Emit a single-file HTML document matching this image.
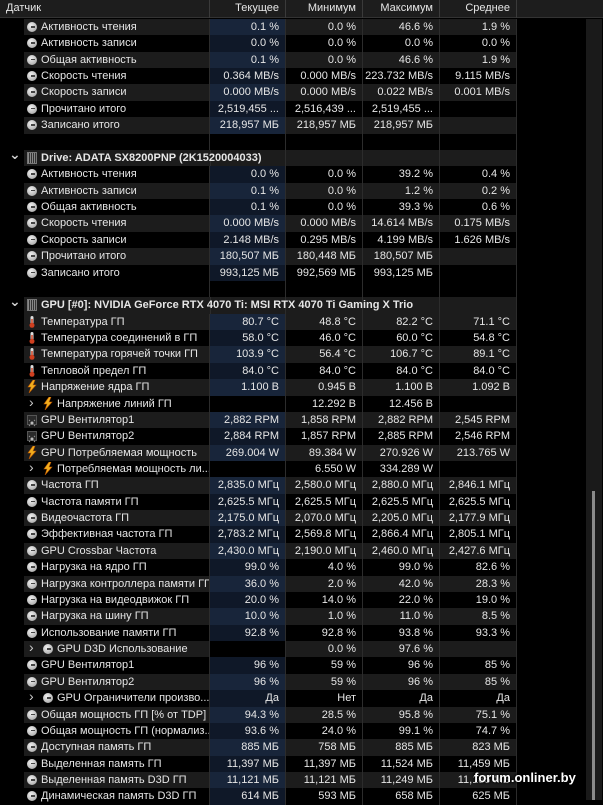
<!DOCTYPE html>
<html><head><meta charset="utf-8"><style>
*{margin:0;padding:0;box-sizing:border-box}
body{width:603px;height:800px;background:#000;overflow:hidden;position:relative;font-family:"Liberation Sans","DejaVu Sans",sans-serif;font-size:11px;color:#e6e6e6}
.hd{position:absolute;left:0;top:0;width:603px;height:18px;background:#1d1d1d;border-bottom:1px solid #333;display:flex}
.hd div{height:18px;line-height:17px;border-right:1px solid #3a3a3a;padding:0 6px;text-align:right}
.r{position:absolute;left:0;height:16.4px;width:517px;display:flex;line-height:16px;white-space:nowrap}
.r div{height:16.4px;border-right:1px solid #2c2c2c;text-align:right;padding-right:6px;overflow:hidden}
.g .n,.g .v{background:#1c1c1c}
.g .c{background:#18253a}
.k .c{background:#0f1828}
.n{width:210px;text-align:left!important;padding-left:41px!important;position:relative}
.c{width:76px}.v{width:77px}
.n i{position:absolute;left:27px;top:3px;width:10px;height:10px}
.n.s{padding-left:57px!important}
.n.s i{left:43px}
.n.s:before{content:"›";position:absolute;left:29px;top:-2px;font-size:14px;color:#ccc}
.ck{border-radius:50%;background:radial-gradient(circle at 40% 35%,#f0f0f0,#9a9a9a)}
.ck:after{content:"";position:absolute;left:4px;top:4px;width:4px;height:1.5px;background:#444}
.b{font-weight:bold}
.hdr{padding-left:41px!important}
.hdr:before{content:"⌄";position:absolute;left:9px;top:-4px;font-size:14px;color:#ccc}
.sb{position:absolute;left:586px;top:19px;width:16px;height:781px;background:#1a1a1a}
.th{position:absolute;left:592px;top:491px;width:3px;height:309px;background:#8a8a8a}
.wm{position:absolute;left:474px;top:770px;font-weight:bold;font-size:13px;color:#fff;text-shadow:1px 1px 2px #000,-1px -1px 2px #000}
</style></head><body>
<div class="hd"><div style="width:210px;text-align:left">Датчик</div><div style="width:76px">Текущее</div><div style="width:77px">Минимум</div><div style="width:77px">Максимум</div><div style="width:77px">Среднее</div><div style="flex:1;border:none"></div></div>
<div id="rows"></div>
<div class="sb"></div><div class="th"></div>
<div class="wm">forum.onliner.by</div>
<script>
var CK='<i class="ck"></i>';
var TH='<i><svg width="10" height="12" viewBox="0 0 10 12" style="margin-top:-1px"><rect x="3.5" y="0" width="3" height="8" rx="1.5" fill="#ddd"/><rect x="4.3" y="3" width="1.4" height="6" fill="#d04020"/><circle cx="5" cy="9.3" r="2.5" fill="#d04020"/></svg></i>';
var BT='<i><svg width="10" height="13" viewBox="0 0 10 13" style="margin-top:-2px"><path d="M6 0L1 7h3l-2 6 7-8H6l2-5z" fill="#f2b01e" stroke="#c05a00" stroke-width=".6"/></svg></i>';
var FN='<i style="background:#2a2a2a;border:1px solid #555"><svg width="8" height="8" viewBox="0 0 8 8"><circle cx="4" cy="4" r="1.5" fill="#bbb"/><circle cx="1.5" cy="1.5" r=".7" fill="#888"/><circle cx="6.5" cy="1.5" r=".7" fill="#888"/><circle cx="1.5" cy="6.5" r=".7" fill="#888"/><circle cx="6.5" cy="6.5" r=".7" fill="#888"/></svg></i>';
var CH='<i style="background:repeating-linear-gradient(90deg,#888 0 1px,#333 1px 2px);border:1px solid #777;height:12px;top:2px"></i>';
var R=[
[CK,'Активность чтения','0.1 %','0.0 %','46.6 %','1.9 %'],
[CK,'Активность записи','0.0 %','0.0 %','0.0 %','0.0 %'],
[CK,'Общая активность','0.1 %','0.0 %','46.6 %','1.9 %'],
[CK,'Скорость чтения','0.364 MB/s','0.000 MB/s','223.732 MB/s','9.115 MB/s'],
[CK,'Скорость записи','0.000 MB/s','0.000 MB/s','0.022 MB/s','0.001 MB/s'],
[CK,'Прочитано итого','2,519,455 ...','2,516,439 ...','2,519,455 ...',''],
[CK,'Записано итого','218,957 МБ','218,957 МБ','218,957 МБ',''],
null,
['H','Drive: ADATA SX8200PNP (2K1520004033)'],
[CK,'Активность чтения','0.0 %','0.0 %','39.2 %','0.4 %'],
[CK,'Активность записи','0.1 %','0.0 %','1.2 %','0.2 %'],
[CK,'Общая активность','0.1 %','0.0 %','39.3 %','0.6 %'],
[CK,'Скорость чтения','0.000 MB/s','0.000 MB/s','14.614 MB/s','0.175 MB/s'],
[CK,'Скорость записи','2.148 MB/s','0.295 MB/s','4.199 MB/s','1.626 MB/s'],
[CK,'Прочитано итого','180,507 МБ','180,448 МБ','180,507 МБ',''],
[CK,'Записано итого','993,125 МБ','992,569 МБ','993,125 МБ',''],
null,
['H','GPU [#0]: NVIDIA GeForce RTX 4070 Ti: MSI RTX 4070 Ti Gaming X Trio'],
[TH,'Температура ГП','80.7 °C','48.8 °C','82.2 °C','71.1 °C'],
[TH,'Температура соединений в ГП','58.0 °C','46.0 °C','60.0 °C','54.8 °C'],
[TH,'Температура горячей точки ГП','103.9 °C','56.4 °C','106.7 °C','89.1 °C'],
[TH,'Тепловой предел ГП','84.0 °C','84.0 °C','84.0 °C','84.0 °C'],
[BT,'Напряжение ядра ГП','1.100 В','0.945 В','1.100 В','1.092 В'],
['S'+BT,'Напряжение линий ГП','','12.292 В','12.456 В',''],
[FN,'GPU Вентилятор1','2,882 RPM','1,858 RPM','2,882 RPM','2,545 RPM'],
[FN,'GPU Вентилятор2','2,884 RPM','1,857 RPM','2,885 RPM','2,546 RPM'],
[BT,'GPU Потребляемая мощность','269.004 W','89.384 W','270.926 W','213.765 W'],
['S'+BT,'Потребляемая мощность ли...','','6.550 W','334.289 W',''],
[CK,'Частота ГП','2,835.0 МГц','2,580.0 МГц','2,880.0 МГц','2,846.1 МГц'],
[CK,'Частота памяти ГП','2,625.5 МГц','2,625.5 МГц','2,625.5 МГц','2,625.5 МГц'],
[CK,'Видеочастота ГП','2,175.0 МГц','2,070.0 МГц','2,205.0 МГц','2,177.9 МГц'],
[CK,'Эффективная частота ГП','2,783.2 МГц','2,569.8 МГц','2,866.4 МГц','2,805.1 МГц'],
[CK,'GPU Crossbar Частота','2,430.0 МГц','2,190.0 МГц','2,460.0 МГц','2,427.6 МГц'],
[CK,'Нагрузка на ядро ГП','99.0 %','4.0 %','99.0 %','82.6 %'],
[CK,'Нагрузка контроллера памяти ГП','36.0 %','2.0 %','42.0 %','28.3 %'],
[CK,'Нагрузка на видеодвижок ГП','20.0 %','14.0 %','22.0 %','19.0 %'],
[CK,'Нагрузка на шину ГП','10.0 %','1.0 %','11.0 %','8.5 %'],
[CK,'Использование памяти ГП','92.8 %','92.8 %','93.8 %','93.3 %'],
['S'+CK,'GPU D3D Использование','','0.0 %','97.6 %',''],
[CK,'GPU Вентилятор1','96 %','59 %','96 %','85 %'],
[CK,'GPU Вентилятор2','96 %','59 %','96 %','85 %'],
['S'+CK,'GPU Ограничители произво...','Да','Нет','Да','Да'],
[CK,'Общая мощность ГП [% от TDP]','94.3 %','28.5 %','95.8 %','75.1 %'],
[CK,'Общая мощность ГП (нормализ...','93.6 %','24.0 %','99.1 %','74.7 %'],
[CK,'Доступная память ГП','885 МБ','758 МБ','885 МБ','823 МБ'],
[CK,'Выделенная память ГП','11,397 МБ','11,397 МБ','11,524 МБ','11,459 МБ'],
[CK,'Выделенная память D3D ГП','11,121 МБ','11,121 МБ','11,249 МБ','11,185 МБ'],
[CK,'Динамическая память D3D ГП','614 МБ','593 МБ','658 МБ','625 МБ']
];
var h='';
R.forEach(function(r,i){
 var top=(19+i*16.37).toFixed(2),cls=i%2==0?'g':'k';
 if(!r){h+='<div class="r '+cls+'" style="top:'+top+'px"><div class="n" style="background:none!important"></div><div class="c" style="background:none"></div><div class="v" style="background:none"></div><div class="v" style="background:none"></div><div class="v" style="background:none"></div></div>';return;}
 if(r[0]=='H'){h+='<div class="r '+cls+'" style="top:'+top+'px;background:linear-gradient(90deg,#000 24px,#1c1c1c 24px)"><div class="n hdr b" style="overflow:visible;width:210px;border-right:none;background:none!important">'+CH+r[1]+'</div><div class="c" style="background:none;border-left:1px solid #2c2c2c"></div><div class="v" style="background:none"></div><div class="v" style="background:none"></div><div class="v" style="background:none"></div></div>';return;}
 var sub=r[0].charAt(0)=='S',ic=sub?r[0].slice(1):r[0];
 var cc=r[2]?'':' style="background:none"';
 h+='<div class="r '+cls+'" style="top:'+top+'px"><div class="n'+(sub?' s':'')+'">'+ic+r[1]+'</div><div class="c"'+cc+'>'+r[2]+'</div><div class="v">'+r[3]+'</div><div class="v">'+r[4]+'</div><div class="v">'+r[5]+'</div></div>';
});
document.getElementById('rows').innerHTML=h;
</script>
<style>.g .n{background:linear-gradient(90deg,#000 24px,#1c1c1c 24px)}</style>
</body></html>
